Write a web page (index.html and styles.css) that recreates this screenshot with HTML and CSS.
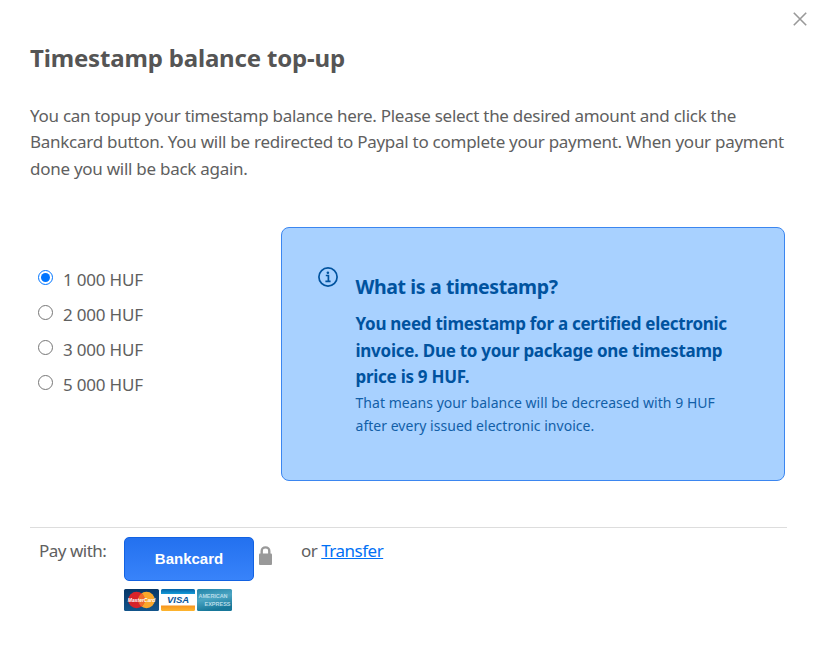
FILE: index.html
```
<!DOCTYPE html>
<html lang="en">
<head>
  <meta charset="UTF-8">
  <meta name="viewport" content="width=device-width, initial-scale=1">
  <title>Timestamp balance top-up</title>
  <link rel="stylesheet" href="styles.css">
</head>
<body>
  <button class="close" type="button" aria-label="Close">
    <svg width="14" height="14" viewBox="0 0 14 14"><path d="M.8.8l12.4 12.4M13.2.8L.8 13.2" stroke="#999" stroke-width="1.6"/></svg>
  </button>

  <main class="modal">
    <h1>Timestamp balance top-up</h1>
    <p class="intro">You can topup your timestamp balance here. Please select the desired amount and click the<br>Bankcard button. You will be redirected to Paypal to complete your payment. When your payment<br>done you will be back again.</p>

    <form id="topup">
      <div class="content">
        <div class="amounts">
          <label><input type="radio" name="amount" value="1000" checked><span>1 000 HUF</span></label>
          <label><input type="radio" name="amount" value="2000"><span>2 000 HUF</span></label>
          <label><input type="radio" name="amount" value="3000"><span>3 000 HUF</span></label>
          <label><input type="radio" name="amount" value="5000"><span>5 000 HUF</span></label>
        </div>

        <section class="info">
          <svg class="info-icon" width="20" height="20" viewBox="0 0 20 20" fill="none" stroke="#00539f">
            <circle cx="10" cy="10" r="9.1" stroke-width="1.7"/>
            <path d="M7.8 8.5h2.6v5.6M7.4 14.4h5.2" stroke-width="1.7"/>
            <circle cx="9.9" cy="5.7" r="1.3" fill="#00539f" stroke="none"/>
          </svg>
          <div class="info-text">
            <h2>What is a timestamp?</h2>
            <p class="lead">You need timestamp for a certified electronic<br>invoice. Due to your package one timestamp<br>price is 9 HUF.</p>
            <p class="note">That means your balance will be decreased with 9 HUF<br>after every issued electronic invoice.</p>
          </div>
        </section>
      </div>

      <div class="payment">
        <span class="pay-label">Pay with:</span>
        <div class="bankcard">
          <button class="pay-btn" type="submit">Bankcard</button>
          <div class="cards">
            <svg width="35" height="22" viewBox="0 0 35 22">
              <defs>
                <linearGradient id="mc" x2="0" y2="1"><stop stop-color="#063667"/><stop offset="1" stop-color="#13558b"/></linearGradient>
              </defs>
              <rect width="35" height="22" rx="1.5" fill="url(#mc)"/>
              <circle cx="22.5" cy="11" r="8.3" fill="#f9a72b"/>
              <circle cx="12.5" cy="11" r="8.3" fill="#d8232a"/>
              <path d="M17.5 4.4a8.3 8.3 0 0 1 0 13.2a8.3 8.3 0 0 1 0-13.2" fill="#ef6b2c"/>
              <text x="17.5" y="13.3" text-anchor="middle" class="mc-text">MasterCard</text>
            </svg>
            <svg width="34" height="22" viewBox="0 0 34 22">
              <defs>
                <linearGradient id="vt" x2="0" y2="1"><stop stop-color="#0561a5"/><stop offset="1" stop-color="#159bd7"/></linearGradient>
                <linearGradient id="vb" x2="0" y2="1"><stop stop-color="#f7931e"/><stop offset="1" stop-color="#fdb62f"/></linearGradient>
              </defs>
              <rect width="34" height="22" rx="1.5" fill="#fff"/>
              <path d="M1.5 0h31A1.5 1.5 0 0 1 34 1.5V5H0V1.5A1.5 1.5 0 0 1 1.5 0" fill="url(#vt)"/>
              <path d="M0 16.5h34v4a1.5 1.5 0 0 1-1.5 1.5h-31A1.5 1.5 0 0 1 0 20.5z" fill="url(#vb)"/>
              <text x="17" y="14.4" text-anchor="middle" class="visa-text">VISA</text>
            </svg>
            <svg width="35" height="22" viewBox="0 0 35 22">
              <defs>
                <linearGradient id="ax" x2="0.3" y2="1"><stop stop-color="#2384a8"/><stop offset=".5" stop-color="#4ba5c3"/><stop offset="1" stop-color="#177799"/></linearGradient>
              </defs>
              <rect width="35" height="22" rx="1.5" fill="url(#ax)"/>
              <text x="1.5" y="9.4" textLength="29" class="amex-text">AMERICAN</text>
              <text x="7.5" y="16.6" textLength="26" class="amex-text">EXPRESS</text>
            </svg>
          </div>
        </div>
        <svg class="lock" width="13" height="19" viewBox="0 0 13 19">
          <path d="M2.7 8.5V5a3.8 3.6 0 0 1 7.6 0v3.5" fill="none" stroke="#999" stroke-width="2.4"/>
          <rect y="7.5" width="13" height="11.5" rx="1" fill="#999"/>
        </svg>
        <span class="transfer">or <a href="#">Transfer</a></span>
      </div>
    </form>
  </main>
</body>
</html>
```
FILE: styles.css
```
:root {
  --text: #555;
  --blue: #00539f;
  font-family: 'Noto Sans', 'Open Sans', sans-serif;
  color: var(--text);
}

* {
  box-sizing: border-box;
}

body {
  margin: 0;
  background: #fff;
  color: #606060;
  font-size: 17px;
  line-height: 26.4px;
}

h1, h2, p {
  margin: 0;
  white-space: nowrap;
}

.close {
  position: absolute;
  top: 12px;
  right: 11px;
  padding: 0;
  border: 0;
  background: none;
  line-height: 0;
}

.modal {
  padding: 41px 31px 0 30px;
}

h1 {
  color: var(--text);
  font-size: 24px;
  line-height: 34px;
  letter-spacing: -0.17px;
}

.intro {
  margin-top: 28px;
  letter-spacing: -0.27px;
}

.content {
  display: flex;
  align-items: flex-start;
  margin-top: 45px;
}

.amounts {
  width: 251px;
  padding: 36px 0 0 8px;
}

.amounts label {
  display: flex;
  height: 35px;
  letter-spacing: -0.2px;
}

.amounts input {
  width: 15px;
  height: 15px;
  margin: 7px 10px 0 0;
  accent-color: #0075ff;
}

.amounts span {
  padding-top: 4px;
}

.info {
  display: flex;
  width: 504px;
  height: 254px;
  padding: 39px 36px;
  gap: 17.5px;
  background: #a8d1ff;
  border: 1px solid #3b86f0;
  border-radius: 8px;
  color: var(--blue);
}

.info-icon {
  flex: none;
}

h2 {
  margin-top: 5px;
  font-size: 19.5px;
  line-height: 30px;
  letter-spacing: -0.38px;
}

.lead {
  margin-top: 9px;
  font-weight: 700;
  letter-spacing: -0.27px;
}

.note {
  padding-top: 1px;
  color: #125fa8;
  font-size: 14px;
  line-height: 23px;
  letter-spacing: 0.03px;
}

.payment {
  display: flex;
  align-items: flex-start;
  margin-top: 46px;
  padding: 9px 0 0 9px;
  border-top: 1px solid #ddd;
}

.pay-label {
  width: 85px;
  padding-top: 1px;
  letter-spacing: -0.5px;
}

.pay-btn {
  display: block;
  width: 130px;
  height: 44px;
  padding: 0 0 2px;
  border: 1px solid #1262e2;
  border-radius: 5px;
  background: linear-gradient(#2371ef, #3883fa);
  color: #fff;
  font: 700 15px 'Liberation Sans', Arial, sans-serif;
}

.cards {
  display: flex;
  gap: 2px;
  margin-top: 8px;
}

.cards svg {
  overflow: visible;
}

.mc-text {
  font: italic 700 5px 'Liberation Sans', sans-serif;
  fill: #fff;
}

.visa-text {
  font: italic 700 9.5px 'Liberation Sans', sans-serif;
  fill: #09549a;
}

.amex-text {
  font: 700 5.5px 'Liberation Sans', sans-serif;
  fill: #b7dce8;
}

.lock {
  margin: 9px 0 0 5px;
}

.transfer {
  margin-left: 29px;
  padding-top: 1px;
  letter-spacing: -0.5px;
}

.transfer a {
  color: #0070f5;
}
```
